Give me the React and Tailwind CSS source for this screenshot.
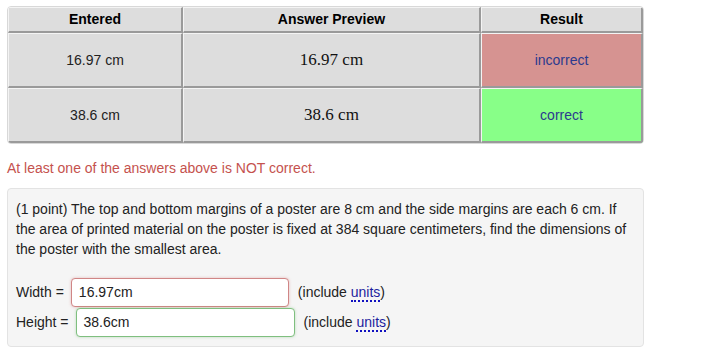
import React from "react";

const rows = [
  { entered: "16.97 cm", preview: "16.97 cm", result: "incorrect", bg: "bg-[#d69391]" },
  { entered: "38.6 cm", preview: "38.6 cm", result: "correct", bg: "bg-[#88ff88]" },
];

const cell =
  "border-solid border-t border-l border-r-2 border-b-2 border-t-[#f4f4f4] border-l-[#f4f4f4] border-r-[#9a9a9a] border-b-[#9a9a9a] text-center";

function AnswerTable() {
  return (
    <table className="border-separate border-spacing-0 border border-[#d8d8d8] rounded-[4px] overflow-hidden w-[637px] table-fixed">
      <colgroup>
        <col className="w-[175px]" />
        <col className="w-[298px]" />
        <col />
      </colgroup>
      <thead>
        <tr className="h-[26px]">
          <th className={`${cell} bg-[#dddddd] font-bold text-black`}>Entered</th>
          <th className={`${cell} bg-[#dddddd] font-bold text-black`}>Answer Preview</th>
          <th className={`${cell} bg-[#dddddd] font-bold text-black`}>Result</th>
        </tr>
      </thead>
      <tbody>
        {rows.map((r) => (
          <tr key={r.entered} className="h-[55px]">
            <td className={`${cell} bg-[#dddddd] text-[#222]`}>{r.entered}</td>
            <td
              className={`${cell} bg-[#dddddd] text-[#111] text-[17px] font-medium`}
              style={{ fontFamily: '"Liberation Serif", serif' }}
            >
              {r.preview}
            </td>
            <td className={`${cell} ${r.bg} text-[#2c3a8e]`}>{r.result}</td>
          </tr>
        ))}
      </tbody>
    </table>
  );
}

function Units() {
  return (
    <span className="text-[#1d1d9e] border-b-2 border-dotted border-[#1010c0] leading-[14px]">units</span>
  );
}

export default function App() {
  return (
    <div
      className="w-[704px] h-[354px] bg-white text-[14px] text-[#222] pt-[6px] pl-[7px]"
      style={{ fontFamily: '"Liberation Sans", Arial, sans-serif' }}
    >
      <AnswerTable />
      <div className="mt-[14px] text-[#c5524e] leading-[20px]">
        At least one of the answers above is NOT correct.
      </div>
      <div className="mt-[10px] w-[637px] bg-[#f5f5f5] border border-[#e3e3e3] rounded-[4px] pt-[10px] pb-[9px] px-[8px]">
        <p className="leading-[20px] text-[#222]">
          (1 point) The top and bottom margins of a poster are 8 cm and the side margins are each 6 cm. If
          the area of printed material on the poster is fixed at 384 square centimeters, find the dimensions of
          the poster with the smallest area.
        </p>
        <div className="mt-[19px] flex flex-col gap-[1px]">
          <div className="flex items-center">
            <span className="mr-[7px]">Width =</span>
            <div className="w-[218px] h-[29px] border border-[#d08686] rounded-[4px] bg-white shadow-[0_0_3px_rgba(200,80,80,0.35)] flex items-center px-[7px]">
              16.97cm
            </div>
            <span className="ml-[9px]">
              (include <Units />)
            </span>
          </div>
          <div className="flex items-center">
            <span className="mr-[7px]">Height =</span>
            <div className="w-[219px] h-[29px] border border-[#7fbf7f] rounded-[4px] bg-white shadow-[0_0_3px_rgba(80,170,80,0.35)] flex items-center px-[7px]">
              38.6cm
            </div>
            <span className="ml-[9px]">
              (include <Units />)
            </span>
          </div>
        </div>
      </div>
    </div>
  );
}
